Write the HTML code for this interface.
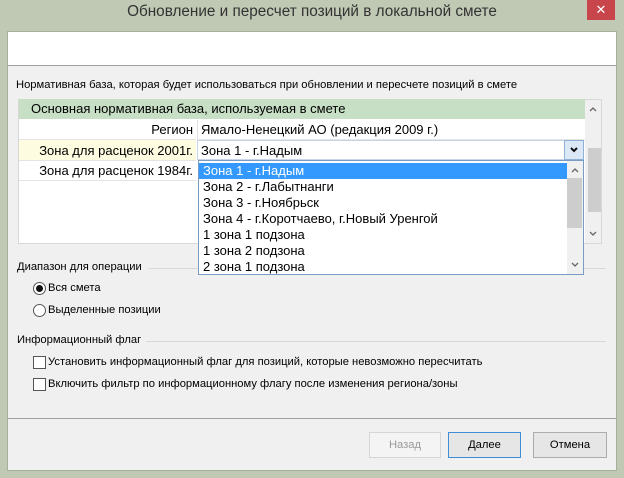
<!DOCTYPE html>
<html><head><meta charset="utf-8"><style>
*{box-sizing:border-box;margin:0;padding:0}
body{width:624px;height:478px;background:#c0c9b4;font-family:"Liberation Sans",sans-serif;position:relative;overflow:hidden;color:#000}
.a{position:absolute}
.t{font-size:11.2px;white-space:nowrap}
.g{font-size:13px;white-space:nowrap}
.sep{height:1px;background:#d8d8d8}
</style></head><body>
<div class="a" style="left:0;top:3px;width:624px;text-align:center;font-size:15.3px;color:#333">Обновление и пересчет позиций в локальной смете</div>
<div class="a" style="left:587px;top:0;width:28px;height:20px;background:#c7454b;color:#fff;text-align:center;font-size:13px;line-height:20px">✕</div>
<div class="a" style="left:7px;top:31px;width:610px;height:440px;background:#f0f0f0;border:1px solid #a8b09c"></div>
<div class="a" style="left:8px;top:32px;width:608px;height:34px;background:#fff;border-bottom:1px solid #a0a0a0"></div>
<div class="a t" style="left:16px;top:79px">Нормативная база, которая будет использоваться при обновлении и пересчете позиций в смете</div>
<!-- grid -->
<div class="a" style="left:18px;top:99px;width:584px;height:145px;background:#fff;border:1px solid #d8d8d8"></div>
<div class="a g" style="left:19px;top:99px;width:566px;height:20px;background:#c7dfc5;padding-left:12px;line-height:20px">Основная нормативная база, используемая в смете</div>
<div class="a g" style="left:19px;top:120px;width:177px;height:20px;text-align:right;padding-right:3px;line-height:20px;border-bottom:1px solid #e4e4e4">Регион</div>
<div class="a g" style="left:197px;top:120px;width:388px;height:20px;padding-left:3px;line-height:20px;border-left:1px solid #e0e0e0;border-bottom:1px solid #e4e4e4">Ямало-Ненецкий АО (редакция 2009 г.)</div>
<div class="a g" style="left:19px;top:140px;width:177px;height:21px;background:#fdfbe0;text-align:right;padding-right:3px;line-height:21px;border-bottom:1px solid #e4e4e4">Зона для расценок 2001г.</div>
<div class="a g" style="left:197px;top:140px;width:387px;height:20px;padding-left:3px;line-height:20px;border:1px solid #c6d6e8">Зона 1 - г.Надым</div>
<div class="a" style="left:564px;top:140px;width:20px;height:20px;background:#dbe8f6;border:1px solid #8fb1d6"><svg width="18" height="18"><path d="M6 7l3 3 3-3" stroke="#111" stroke-width="2" fill="none"/></svg></div>
<div class="a g" style="left:19px;top:161px;width:177px;height:20px;text-align:right;padding-right:3px;line-height:20px;border-bottom:1px solid #e4e4e4">Зона для расценок 1984г.</div>
<div class="a" style="left:585px;top:100px;width:16px;height:143px;background:#f0f0f0"></div>
<div class="a" style="left:588px;top:148px;width:13px;height:64px;background:#cdcdcd"></div>
<svg class="a" style="left:585px;top:100px" width="16" height="143"><path d="M5 11l3-3 3 3M5 132l3 3 3-3" stroke="#666" stroke-width="1.3" fill="none"/></svg>
<!-- Range -->
<div class="a sep" style="left:148px;top:268px;width:458px"></div>
<div class="a t" style="left:17px;top:261px">Диапазон для операции</div>
<div class="a" style="left:33px;top:282px;width:13px;height:13px;border:1px solid #555;border-radius:50%;background:#fff"></div>
<div class="a" style="left:36px;top:285px;width:7px;height:7px;border-radius:50%;background:#111"></div>
<div class="a t" style="left:48px;top:282px">Вся смета</div>
<div class="a" style="left:33px;top:304px;width:13px;height:13px;border:1px solid #555;border-radius:50%;background:#fff"></div>
<div class="a t" style="left:48px;top:304px">Выделенные позиции</div>
<div class="a sep" style="left:146px;top:341px;width:460px"></div>
<div class="a t" style="left:17px;top:334px">Информационный флаг</div>
<div class="a" style="left:33px;top:356px;width:13px;height:13px;border:1px solid #555;background:#fff"></div>
<div class="a t" style="left:48px;top:356px">Установить информационный флаг для позиций, которые невозможно пересчитать</div>
<div class="a" style="left:33px;top:378px;width:13px;height:13px;border:1px solid #555;background:#fff"></div>
<div class="a t" style="left:48px;top:378px">Включить фильтр по информационному флагу после изменения региона/зоны</div>
<div class="a" style="left:8px;top:418px;width:608px;height:1px;background:#a0a0a0"></div>
<div class="a t" style="left:369px;top:432px;width:72px;height:26px;border:1px solid #d6d6d6;background:#f4f4f4;color:#9a9a9a;text-align:center;line-height:24px">Назад</div>
<div class="a t" style="left:448px;top:432px;width:73px;height:26px;border:1px solid #3c8fd6;background:#e6e6e6;text-align:center;line-height:24px">Далее</div>
<div class="a t" style="left:533px;top:432px;width:74px;height:26px;border:1px solid #acacac;background:#e6e6e6;text-align:center;line-height:24px">Отмена</div>
<!-- dropdown list -->
<div class="a" style="left:198px;top:160px;width:386px;height:115px;background:#fff;border:1px solid #7a9cc4"></div>
<div class="a g" style="left:199px;top:163px;width:368px;height:16px;background:#3399ff;color:#fff;padding-left:4px;line-height:16px">Зона 1 - г.Надым</div>
<div class="a g" style="left:203px;top:179px;line-height:16px">Зона 2 - г.Лабытнанги<br>Зона 3 - г.Ноябрьск<br>Зона 4 - г.Коротчаево, г.Новый Уренгой<br>1 зона 1 подзона<br>1 зона 2 подзона<br>2 зона 1 подзона</div>
<div class="a" style="left:567px;top:161px;width:16px;height:113px;background:#f0f0f0"></div>
<div class="a" style="left:567px;top:178px;width:15px;height:50px;background:#cdcdcd"></div>
<svg class="a" style="left:567px;top:161px" width="16" height="113"><path d="M5 11l3-3 3 3M5 102l3 3 3-3" stroke="#666" stroke-width="1.3" fill="none"/></svg>
</body></html>
